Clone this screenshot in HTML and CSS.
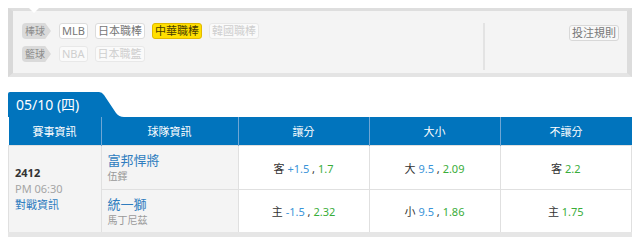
FILE: index.html
```html
<!DOCTYPE html>
<html lang="zh-Hant">
<head>
  <meta charset="UTF-8">
  <meta name="viewport" content="width=device-width, initial-scale=1.0">
  <title>賽事 - 中華職棒</title>
  <link rel="stylesheet" href="styles.css">
</head>
<body>
  <div class="filter">
    <div class="leagues">
      <div class="league-row">
        <span class="sport">棒球</span>
        <span class="tag">MLB</span>
        <span class="tag">日本職棒</span>
        <span class="tag active">中華職棒</span>
        <span class="tag off">韓國職棒</span>
      </div>
      <div class="league-row">
        <span class="sport">籃球</span>
        <span class="tag off">NBA</span>
        <span class="tag off">日本職籃</span>
      </div>
    </div>
    <div class="side">
      <button class="rules">投注規則</button>
    </div>
  </div>

  <div class="day">
    <div class="day-tab">
      <span class="day-date">05/10 (四)</span>
      <svg class="day-edge" width="30" height="25" viewBox="0 0 30 25">
        <path d="M0 0 H2 Q5 0 7 3 L19 21 Q22 25 27 25 H30 V25 H0 Z" fill="#0174bd"/>
      </svg>
    </div>
    <table class="games">
      <thead>
        <tr>
          <th class="c-info">賽事資訊</th>
          <th class="c-team">球隊資訊</th>
          <th class="c-odds">讓分</th>
          <th class="c-odds">大小</th>
          <th>不讓分</th>
        </tr>
      </thead>
      <tbody>
        <tr class="row-a">
          <td class="info" rowspan="2">
            <div class="game-no">2412</div>
            <div class="game-time">PM 06:30</div>
            <a class="game-link" href="#">對戰資訊</a>
          </td>
          <td class="team">
            <div class="team-name">富邦悍將</div>
            <div class="pitcher">伍鐸</div>
          </td>
          <td class="odds">客 <span class="line">+1.5</span> , <span class="price">1.7</span></td>
          <td class="odds">大 <span class="line">9.5</span> , <span class="price">2.09</span></td>
          <td class="odds">客 <span class="price">2.2</span></td>
        </tr>
        <tr class="row-b">
          <td class="team">
            <div class="team-name">統一獅</div>
            <div class="pitcher">馬丁尼茲</div>
          </td>
          <td class="odds">主 <span class="line">-1.5</span> , <span class="price">2.32</span></td>
          <td class="odds">小 <span class="line">9.5</span> , <span class="price">1.86</span></td>
          <td class="odds">主 <span class="price">1.75</span></td>
        </tr>
      </tbody>
    </table>
  </div>
</body>
</html>
```

FILE: styles.css
```css
body {
  margin: 8px;
  background-color: #fff;
  font-family: "Noto Sans", "Noto Sans CJK TC", sans-serif;
  color: #333;
}

/* league filter panel */
.filter {
  position: relative;
  display: flex;
  height: 62px;
  background-color: #f4f4f4;
  border-top: 3px solid #dedede;
  border-left: 5px solid #d9d9d9;
  border-right: 5px solid #dcdcdc;
  border-bottom: 4px solid #e4e4e4;
}
.filter::before {
  content: "";
  position: absolute;
  top: -3px;
  left: 16px;
  border-left: 5px solid transparent;
  border-right: 5px solid transparent;
  border-top: 5px solid #fff;
}
.leagues {
  flex: 1;
  padding: 12px 0 0 9px;
}
.league-row {
  display: flex;
  align-items: center;
  gap: 7px;
  height: 16px;
  margin-bottom: 7px;
}
.sport {
  width: 26px;
  height: 16px;
  line-height: 16px;
  padding-left: 3px;
  margin-right: 1px;
  background-color: #dadada;
  color: #8a8a8a;
  font-size: 10px;
  border-radius: 4px 0 0 4px;
  clip-path: polygon(0 0, 80% 0, 100% 50%, 80% 100%, 0 100%);
}
.tag {
  height: 14px;
  line-height: 14px;
  padding: 0 2px;
  font-size: 11px;
  color: #777;
  background-color: #fff;
  border: 1px solid #dcdcdc;
  border-radius: 3px;
}
.tag.active {
  background-color: #ffdf00;
  border-color: #e2b900;
  color: #4a3b00;
}
.tag.off {
  color: #cfcfcf;
  border-color: #e8e8e8;
  background-color: #fafafa;
}
.side {
  width: 134px;
  margin: 12px 0 3px;
  padding: 2px 8px 0 0;
  border-left: 2px solid #e3e3e3;
  display: flex;
  justify-content: flex-end;
  align-items: flex-start;
}
.rules {
  height: 16px;
  padding: 0 2px;
  font-family: inherit;
  font-size: 11px;
  line-height: 14px;
  color: #777;
  background-color: #f8f8f8;
  border: 1px solid #d8d8d8;
  border-radius: 3px;
}

/* day block */
.day {
  margin-top: 15px;
}
.day-tab {
  display: flex;
  height: 25px;
}
.day-date {
  width: 81px;
  padding-left: 8px;
  line-height: 25px;
  font-size: 14px;
  color: #fff;
  background-color: #0174bd;
  border-radius: 2px 0 0 0;
}
.day-edge {
  display: block;
}
.games {
  width: 624px;
  border-collapse: collapse;
  table-layout: fixed;
  border-bottom: 5px solid #e6e6e6;
  font-size: 11px;
}
.games th {
  height: 28px;
  padding: 0;
  font-weight: normal;
  color: #fff;
  background-color: #0174bd;
  border-left: 1px solid #6fa6d4;
}
.games th:first-child {
  border-left: none;
}
.c-info { width: 92px; }
.c-team { width: 136px; }
.c-odds { width: 130px; }
.games td {
  padding: 0;
  border: 1px solid #e0e0e0;
}
.row-a td { height: 43px; }
.row-b td { height: 42px; }
.info {
  background-color: #f4f4f4;
  padding-left: 6px !important;
  line-height: 16px;
}
.game-no {
  font-weight: bold;
  color: #333;
}
.game-time {
  color: #a5a5a5;
}
.game-link {
  color: #2f7dbf;
  text-decoration: none;
}
.team {
  background-color: #f4f4f4;
  padding-left: 6px !important;
}
.team-name {
  font-size: 13px;
  line-height: 17px;
  color: #2f7dbf;
}
.pitcher {
  font-size: 10px;
  line-height: 14px;
  color: #999;
}
.odds {
  text-align: center;
  color: #333;
  background-color: #fff;
}
.line {
  color: #3a94d8;
}
.price {
  color: #3aad3a;
}
```
